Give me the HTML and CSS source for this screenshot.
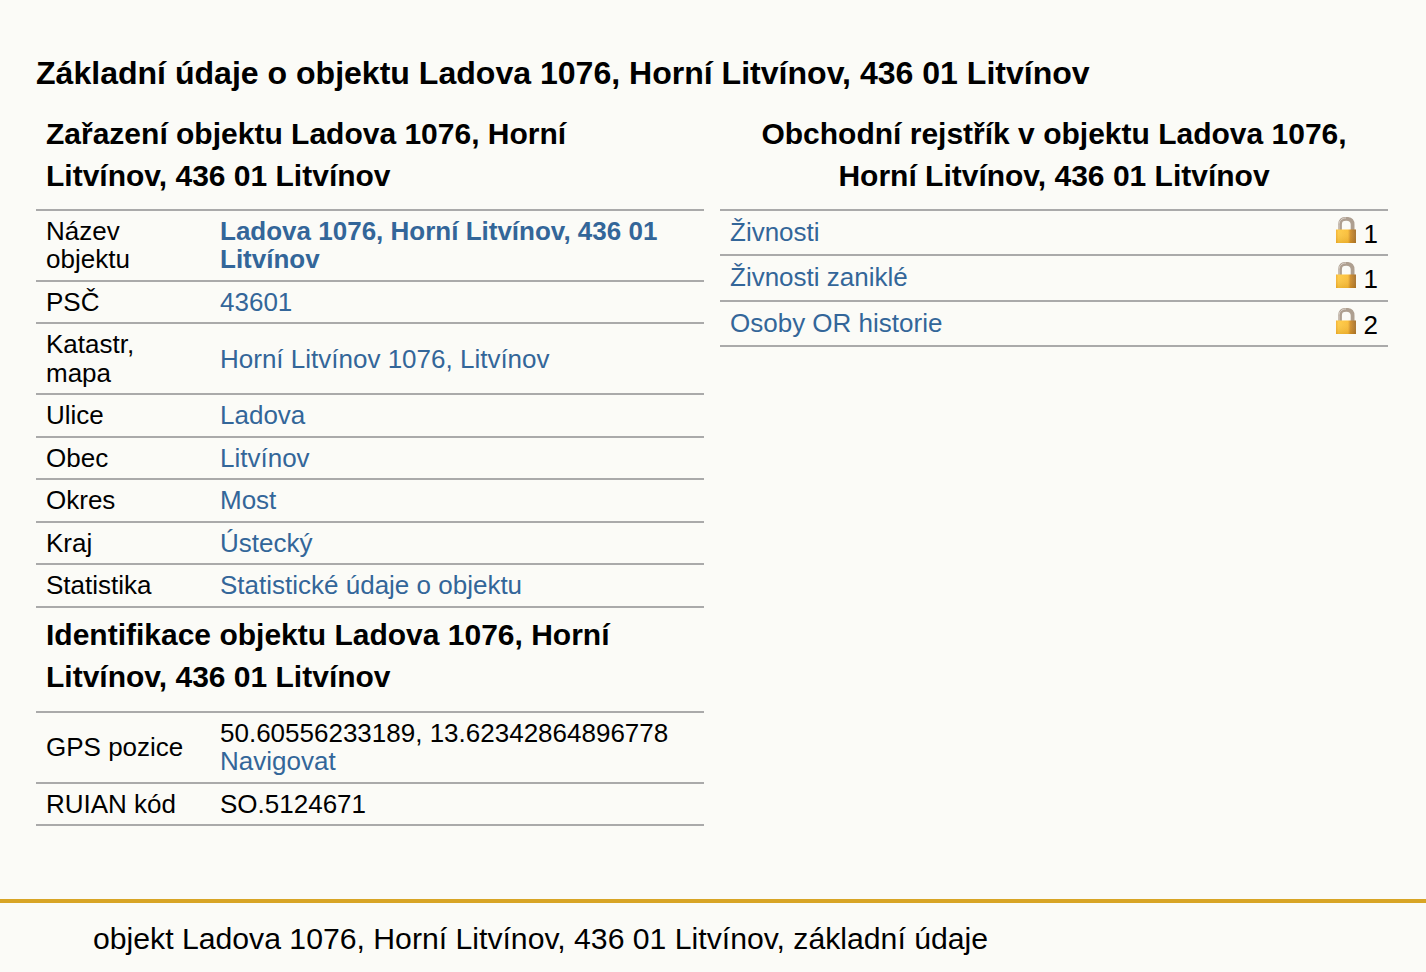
FILE: index.html
```html
<!DOCTYPE html>
<html lang="cs">
<head>
<meta charset="utf-8">
<title>Ladova 1076</title>
<link rel="stylesheet" href="styles.css">
</head>
<body>
<main class="content">
<h1 class="title">Základní údaje o objektu Ladova 1076, Horní Litvínov, 436 01 Litvínov</h1>
<div class="columns">
<section class="col">
<h2 class="heading">Zařazení objektu Ladova 1076, Horní Litvínov, 436 01 Litvínov</h2>
<table class="data">
<tr><td class="label">Název objektu</td><td><a href="#" class="strong">Ladova 1076, Horní Litvínov, 436 01 Litvínov</a></td></tr>
<tr><td class="label">PSČ</td><td><a href="#">43601</a></td></tr>
<tr><td class="label">Katastr, mapa</td><td><a href="#">Horní Litvínov 1076, Litvínov</a></td></tr>
<tr><td class="label">Ulice</td><td><a href="#">Ladova</a></td></tr>
<tr><td class="label">Obec</td><td><a href="#">Litvínov</a></td></tr>
<tr><td class="label">Okres</td><td><a href="#">Most</a></td></tr>
<tr><td class="label">Kraj</td><td><a href="#">Ústecký</a></td></tr>
<tr><td class="label">Statistika</td><td><a href="#">Statistické údaje o objektu</a></td></tr>
</table>
<h2 class="heading heading-second">Identifikace objektu Ladova 1076, Horní Litvínov, 436 01 Litvínov</h2>
<table class="data">
<tr><td class="label">GPS pozice</td><td>50.60556233189, 13.62342864896778<br><a href="#">Navigovat</a></td></tr>
<tr><td class="label">RUIAN kód</td><td>SO.5124671</td></tr>
</table>
</section>
<section class="col">
<h2 class="heading centered">Obchodní rejstřík v objektu Ladova 1076, Horní Litvínov, 436 01 Litvínov</h2>
<table class="data registry">
<tr><td><a href="#">Živnosti</a></td><td class="count"><svg class="lock" viewBox="0 0 20 26"><use href="#lock"/></svg> 1</td></tr>
<tr><td><a href="#">Živnosti zaniklé</a></td><td class="count"><svg class="lock" viewBox="0 0 20 26"><use href="#lock"/></svg> 1</td></tr>
<tr><td><a href="#">Osoby OR historie</a></td><td class="count"><svg class="lock" viewBox="0 0 20 26"><use href="#lock"/></svg> 2</td></tr>
</table>
</section>
</div>
</main>
<footer class="footer">objekt Ladova 1076, Horní Litvínov, 436 01 Litvínov, základní údaje</footer>
<svg class="defs" width="0" height="0">
<defs>
<linearGradient id="body" x1="0" x2="1" y1="0" y2="0"><stop offset="0" stop-color="#f4ae28"/><stop offset=".12" stop-color="#ffca40"/><stop offset=".6" stop-color="#fbbd33"/><stop offset=".72" stop-color="#d08c26"/><stop offset="1" stop-color="#a06b28"/></linearGradient>
<linearGradient id="bodyv" x1="0" x2="0" y1="0" y2="1"><stop offset="0" stop-color="#fff" stop-opacity=".05"/><stop offset="1" stop-color="#b87a10" stop-opacity=".25"/></linearGradient>
<symbol id="lock" viewBox="0 0 20 26">
<path d="M4 13V7.500C4 3.500 6 1.800 10.300 1.800S16.600 3.500 16.600 7.500V13" fill="none" stroke="#ae9f90" stroke-width="3.800"/>
<path d="M3 13V7.500C3 3.500 6 1 10 1" fill="none" stroke="#dcd4cc" stroke-width="1"/>
<rect x="0" y="12.500" width="20" height="13.500" fill="url(#body)"/>
<rect x="0" y="12.500" width="20" height="13.500" fill="url(#bodyv)"/>
</symbol>
</defs>
</svg>
</body>
</html>
```
FILE: styles.css
```css
* { box-sizing: border-box; }
html, body { margin: 0; padding: 0; }
body {
  background: #fbfbf7;
  color: #000;
  font-family: "Liberation Sans", Arial, sans-serif;
  font-size: 26px;
  height: 972px;
  overflow: hidden;
}
.content { padding: 52px 38px 0 36px; height: 899px; }
.title { margin: 0 0 18.900px; font-size: 32.060px; line-height: 42px; font-weight: 700; }
.columns { display: flex; gap: 16px; }
.col { flex: 1 1 0; min-width: 0; }
.heading { margin: 0; padding: 0 10px 12px; font-size: 30px; line-height: 42px; font-weight: 700; }
.heading-second { padding-top: 6.500px; padding-bottom: 12.500px; }
.centered { text-align: center; }
.data { width: 100%; border-collapse: collapse; border-top: 2px solid #aaa; }
.data td { padding: 6px 10px; border-bottom: 2px solid #aaa; line-height: 28.500px; vertical-align: middle; }
.data .label { width: 174px; }
.data a { color: #336699; text-decoration: none; }
.data a.strong { font-weight: 700; }
.registry td { padding: 7px 10px 8px; line-height: 28px; }
.registry tr + tr td { padding-bottom: 8.700px; }
.registry .count, .registry tr + tr .count { padding: 6px 10px 0; line-height: 34px; text-align: right; white-space: nowrap; vertical-align: top; }
.lock { width: 20px; height: 26px; vertical-align: top; }
.defs { position: absolute; }
.footer { border-top: 4px solid #d8a526; padding: 18px 93px; font-size: 30.200px; line-height: 36px; height: 73px; }
```
